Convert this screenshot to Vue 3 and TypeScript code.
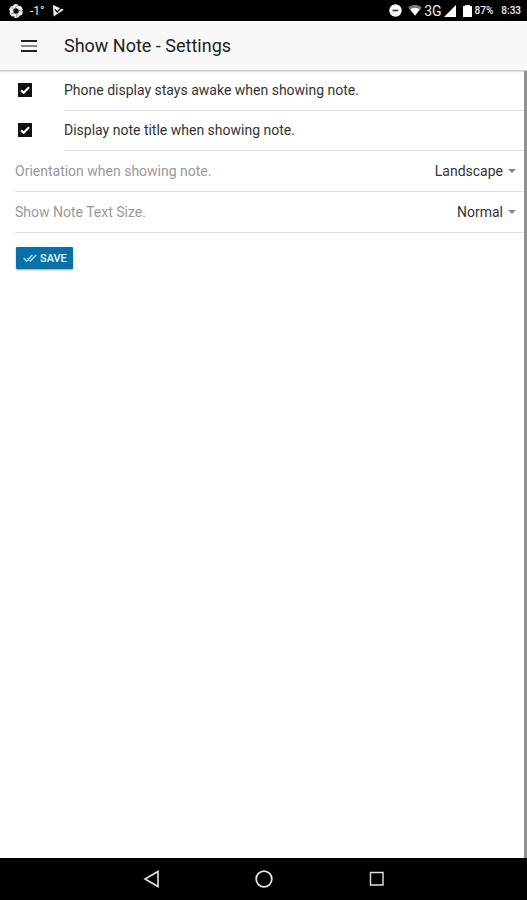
<script setup lang="ts">
import { reactive } from 'vue'

interface Toggle {
  id: string
  label: string
  value: boolean
}

interface Choice {
  id: string
  label: string
  value: string
  options: string[]
}

const toggles = reactive<Toggle[]>([
  { id: 'stay-awake', label: 'Phone display stays awake when showing note.', value: true },
  { id: 'show-title', label: 'Display note title when showing note.', value: true },
])

const choices = reactive<Choice[]>([
  { id: 'orientation', label: 'Orientation when showing note.', value: 'Landscape', options: ['Landscape', 'Portrait'] },
  { id: 'text-size', label: 'Show Note Text Size.', value: 'Normal', options: ['Small', 'Normal', 'Large'] },
])
</script>

<template>
  <div class="screen">
    <div class="status">
      <div class="status-group left">
        <svg width="14" height="14" viewBox="0 0 14 14">
          <circle cx="7" cy="7" r="4.4" fill="none" stroke="#f2f2f2" stroke-width="3.4" />
          <circle cx="7" cy="7" r="6.2" fill="none" stroke="#f2f2f2" stroke-width="1.4" stroke-dasharray="4.6 1.89" />
          <path d="M6 4.2 8.2 1.2M9.5 6 12.6 7.6M8.5 9.6 7.2 12.8M5 9 1.6 10M4.6 5.8 2.6 3" stroke="#444" stroke-width=".6" />
        </svg>
        <span class="temp">-1°</span>
        <svg width="12" height="13" viewBox="0 0 12 13">
          <path d="M1 1 11.8 5.8 1.6 12.4Z" fill="#f2f2f2" />
          <path d="m3 5.4 2.2 2.6L9.6 3.4" fill="none" stroke="#000" stroke-width="1.3" />
        </svg>
      </div>
      <div class="status-group right">
        <svg class="dnd" width="13" height="13" viewBox="0 0 13 13">
          <circle cx="6.5" cy="6.5" r="6.2" fill="#fff" />
          <path d="M3.6 6.5h5.8" stroke="#333" stroke-width="1.6" />
        </svg>
        <svg width="14" height="11" viewBox="0 0 14 11">
          <path d="M.5 2.5Q7-1.8 13.5 2.5L7 10.7Z" fill="#fff" />
          <path d="M.5 2.5Q7-1.8 13.5 2.5L12 4.4Q7 1.1 2 4.4Z" fill="#777" />
        </svg>
        <span class="network">3G</span>
        <svg class="signal" width="12" height="12" viewBox="0 0 12 12">
          <path d="M12 0v12H0Z" fill="#fff" />
        </svg>
        <svg width="9" height="12" viewBox="0 0 9 12">
          <path d="M0 1h2V0h5v1h2v11H0Z" fill="#fff" />
        </svg>
        <span class="small">87%</span>
        <span class="small clock">8:33</span>
      </div>
    </div>

    <header class="toolbar">
      <button class="menu" type="button" aria-label="Menu">
        <svg width="16" height="12" viewBox="0 0 16 12">
          <path d="M0 1h16M0 11h16" stroke="#222" stroke-width="2" />
          <path d="M0 6h16" stroke="#888" stroke-width="2" />
        </svg>
      </button>
      <h1>Show Note - Settings</h1>
    </header>

    <main class="content">
      <div v-for="t in toggles" :key="t.id" class="row toggle-row">
        <input :id="t.id" v-model="t.value" type="checkbox" class="box" />
        <svg class="tick" width="14" height="14" viewBox="0 0 14 14">
          <path d="m3 7.2 2.7 2.6L11 4.2" fill="none" stroke="#fff" stroke-width="2" />
        </svg>
        <label :for="t.id" class="toggle-label">{{ t.label }}</label>
      </div>

      <div v-for="c in choices" :key="c.id" class="row choice-row">
        <label :for="c.id" class="choice-label">{{ c.label }}</label>
        <select :id="c.id" v-model="c.value" class="choice">
          <option v-for="o in c.options" :key="o">{{ o }}</option>
        </select>
        <svg class="caret" width="8" height="4" viewBox="0 0 8 4">
          <path d="M0 0h8L4 4Z" fill="#858585" />
        </svg>
      </div>

      <button class="save" type="button">
        <svg width="14" height="8" viewBox="0 0 14 8">
          <path d="m.7 4.2 2.9 2.9L9.4 1M4.4 4.2l2.9 2.9L13.2 1" fill="none" stroke="#a9dcef" stroke-width="1.5" />
        </svg>
        <span>SAVE</span>
      </button>
    </main>

    <nav class="navbar">
      <button type="button" aria-label="Back">
        <svg width="20" height="20" viewBox="0 0 20 20">
          <path d="M17 2.5v15L4 10Z" fill="none" stroke="#e4e4e4" stroke-width="1.6" />
        </svg>
      </button>
      <button type="button" aria-label="Home">
        <svg width="20" height="20" viewBox="0 0 20 20">
          <circle cx="10" cy="10" r="7.8" fill="none" stroke="#e4e4e4" stroke-width="1.8" />
        </svg>
      </button>
      <button type="button" aria-label="Recent apps">
        <svg width="20" height="20" viewBox="0 0 20 20">
          <path d="M3.5 3.5h12.5v12.5H3.5Z" fill="none" stroke="#e4e4e4" stroke-width="1.4" />
        </svg>
      </button>
    </nav>
  </div>
</template>

<style>
body {
  margin: 0;
  background: #fff;
}
</style>

<style scoped>
.screen {
  display: flex;
  flex-direction: column;
  min-height: 100vh;
  font-family: Roboto, "Liberation Sans", sans-serif;
  font-size: 14px;
  color: #333;
}

svg {
  display: block;
  flex: none;
}

button {
  margin: 0;
  border: 0;
  padding: 0;
  background: none;
  font-family: inherit;
}

.status {
  display: flex;
  justify-content: space-between;
  height: 21px;
  padding: 0 6px 0 9px;
  background: #000;
  color: #eee;
}

.status-group {
  display: flex;
  align-items: center;
}

.left {
  gap: 7px;
}

.temp {
  font-size: 12px;
}

.dnd {
  margin-right: 6px;
}

.network {
  margin: 0 2px;
  font-size: 14px;
  line-height: 20px;
}

.signal {
  margin-right: 7px;
}

.small {
  margin-left: 3px;
  font-size: 10px;
  font-weight: 500;
}

.clock {
  margin-left: 8px;
}

.toolbar {
  display: flex;
  align-items: center;
  box-sizing: border-box;
  height: 50px;
  padding-left: 21px;
  border-bottom: 1px solid #cfcfcf;
  background: #f8f8f8;
  box-shadow: 0 1px 1px #e2e2e2;
}

.menu {
  margin-right: 27px;
}

h1 {
  margin: 0;
  font-size: 18px;
  font-weight: 400;
  line-height: 24px;
  color: #222;
}

.content {
  flex: 1;
  border-right: 3px solid #929292;
}

.row {
  display: flex;
  align-items: center;
  height: 40px;
}

.toggle-row {
  position: relative;
  padding-left: 18px;
}

.box {
  appearance: none;
  flex: none;
  width: 14px;
  height: 14px;
  box-sizing: border-box;
  margin: 0 32px 2px 0;
  border: 1px solid #111;
  background: #fff;
}

.box:checked {
  background: #111;
}

.tick {
  position: absolute;
  left: 18px;
  margin-bottom: 2px;
  pointer-events: none;
}

.toggle-label {
  flex: 1;
  border-bottom: 1px solid #dedede;
  line-height: 39px;
}

.choice-row {
  margin-left: 15px;
  padding-right: 8px;
  border-bottom: 1px solid #dedede;
}

.choice-label {
  color: #999;
}

.choice {
  appearance: none;
  flex: 1;
  min-width: 0;
  margin: 0 5px 0 8px;
  border: 0;
  padding: 0;
  background: none;
  font: inherit;
  color: #333;
  text-align-last: right;
}

.save {
  display: flex;
  align-items: center;
  gap: 3px;
  height: 22px;
  margin: 14px 16px;
  padding: 0 6px 0 7px;
  border-radius: 1px;
  background: #0870a6;
  box-shadow: 0 1px 2px #8aa9b8;
  color: #e8f7fc;
  font-size: 11px;
  font-weight: 500;
}

.navbar {
  display: flex;
  align-items: center;
  justify-content: center;
  gap: 93px;
  height: 42px;
  background: #000;
}
</style>
